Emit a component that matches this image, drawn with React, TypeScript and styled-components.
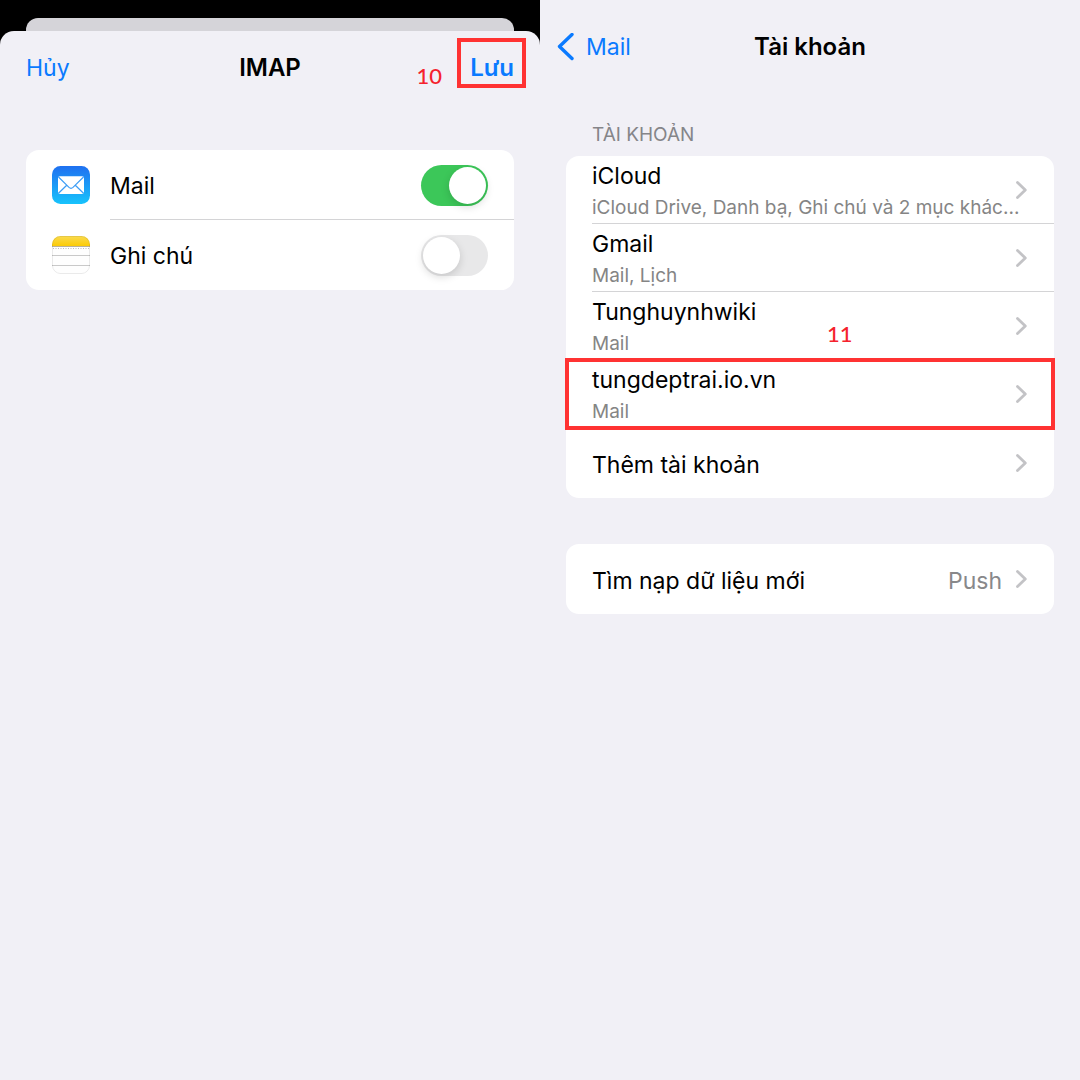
import React from "react";
import styled, { createGlobalStyle } from "styled-components";

const GlobalStyle = createGlobalStyle`
  *, *::before, *::after { box-sizing: border-box; }
  body {
    margin: 0;
    background: #f1f0f6;
    color: #000;
    font-family: Inter, "Noto Sans", sans-serif;
    font-size: 23px;
    line-height: 32px;
  }
  button, input { font: inherit; color: inherit; }
`;

const Page = styled.main`
  display: grid;
  grid-template-columns: repeat(2, minmax(0, 1fr));
  min-height: 100vh;
`;

const Backdrop = styled.section`
  display: flex;
  flex-direction: column;
  padding-top: 18px;
  background: #000;
`;

const SheetBehind = styled.div`
  height: 13px;
  margin: 0 26px;
  border-radius: 12px 12px 0 0;
  background: #d5d4d9;
`;

const Sheet = styled.div`
  flex: 1;
  border-radius: 14px 14px 0 0;
  background: #f1f0f6;
`;

const Screen = styled.section`
  background: #f1f0f6;
`;

const NavBar = styled.header<{ $height: number; $inset: number }>`
  display: grid;
  grid-template-columns: 1fr auto 1fr;
  align-items: center;
  height: ${(p) => p.$height}px;
  padding: 0 ${(p) => p.$inset}px;
`;

const Title = styled.h1`
  margin: 0;
  padding-top: 2px;
  font-size: 24px;
  font-weight: 600;
`;

const NavButton = styled.button<{ $strong?: boolean }>`
  display: flex;
  align-items: center;
  gap: 12px;
  justify-self: ${(p) => (p.$strong ? "end" : "start")};
  padding: 2px 0 0;
  border: 0;
  background: none;
  color: #0a7aff;
  font-size: ${(p) => (p.$strong ? 24 : 23)}px;
  font-weight: ${(p) => (p.$strong ? 600 : 400)};
  position: relative;
  cursor: pointer;
`;

const SaveFrame = styled.span`
  position: absolute;
  inset: -12px -12px -4px -13px;
  border: 4px solid #ff3232;
  pointer-events: none;
`;

const RowFrame = styled.span`
  position: absolute;
  inset: -2px -1px;
  border: 4px solid #ff3232;
  pointer-events: none;
`;

const Step = styled.span`
  position: absolute;
  color: #f5222d;
  font-family: Lato, sans-serif;
  font-size: 22px;
  font-weight: 500;
  line-height: 28px;
`;

const SaveStep = styled(Step)`
  right: 72px;
  top: 12px;
`;

const RowStep = styled(Step)`
  left: 261px;
  bottom: 12px;
`;

const Card = styled.ul<{ $top: number }>`
  margin: ${(p) => p.$top}px 26px 0;
  padding: 0;
  list-style: none;
  border-radius: 13px;
  background: #fff;
`;

const AppRow = styled.li`
  display: flex;
  align-items: center;
  height: 70px;
  padding-left: 26px;
`;

const AppLabel = styled.label<{ $divided?: boolean }>`
  display: flex;
  flex: 1;
  align-items: center;
  justify-content: space-between;
  height: 70px;
  margin-left: 20px;
  padding-right: 26px;
  border-bottom: 1px solid ${(p) => (p.$divided ? "#d4d4d6" : "transparent")};
`;

const AppName = styled.span`
  padding-top: 3px;
`;

const Switch = styled.input`
  appearance: none;
  width: 67px;
  height: 41px;
  margin: 1px 0 0;
  padding: 2px;
  border-radius: 21px;
  background: #e8e8e9;
  cursor: pointer;

  &::before {
    content: "";
    display: block;
    width: 37px;
    height: 37px;
    border-radius: 50%;
    background: #fff;
    box-shadow: 0 3px 8px rgba(0, 0, 0, 0.15);
  }
  &:checked { background: #3cc759; }
  &:checked::before { margin-left: auto; }
`;

const SectionLabel = styled.h2`
  margin: 31px 52px 0;
  color: #858589;
  font-size: 19px;
  font-weight: 400;
  line-height: 24px;
`;

const Row = styled.li`
  position: relative;
`;

const RowButton = styled.button`
  display: block;
  width: 100%;
  padding: 0 0 0 26px;
  border: 0;
  background: none;
  text-align: left;
  cursor: pointer;
`;

const RowContent = styled.span<{ $divided?: boolean; $tall?: boolean }>`
  display: flex;
  align-items: center;
  height: ${(p) => (p.$tall ? 70 : 68)}px;
  padding-right: 26px;
  border-bottom: 1px solid ${(p) => (p.$divided ? "#d4d4d6" : "transparent")};
`;

const RowText = styled.span`
  flex: 1;
  min-width: 0;
  padding-top: 4px;
  white-space: nowrap;
`;

const Detail = styled.span`
  display: block;
  color: #858585;
  font-size: 19px;
  line-height: 32px;
`;

const Value = styled.span`
  margin-right: 14px;
  padding-top: 4px;
  color: #88888a;
`;

const Chevron = () => (
  <svg width="12" height="20" viewBox="0 0 12 20" fill="none" aria-hidden="true">
    <path d="M1.5 2.5 9.3 10 1.5 17.5" stroke="#c3c3c6" strokeWidth="2.8" strokeLinecap="round" strokeLinejoin="round" />
  </svg>
);

const BackChevron = () => (
  <svg width="17" height="28" viewBox="0 0 17 28" fill="none" aria-hidden="true">
    <path d="M15 1.500 2.500 13.500 15 25.500" stroke="#0a7aff" strokeWidth="3.4" strokeLinecap="round" strokeLinejoin="round" />
  </svg>
);

const MailIcon = () => (
  <svg width="38" height="38" viewBox="0 0 38 38" aria-hidden="true">
    <defs>
      <linearGradient id="mailSky" x1="0" y1="0" x2="0" y2="1">
        <stop offset="0" stopColor="#1f70f0" />
        <stop offset="1" stopColor="#17c3fc" />
      </linearGradient>
    </defs>
    <rect width="38" height="38" rx="8.5" fill="url(#mailSky)" />
    <rect x="6" y="10.3" width="26" height="17.6" rx="1.8" fill="#fff" />
    <path d="M6.5 11 17 21.4q2 1.8 4 0L31.5 11M6.5 27.3 14.7 19.2M31.5 27.3 23.3 19.2" fill="none" stroke="#3d9df5" strokeWidth="1.2" />
  </svg>
);

const NotesIcon = () => (
  <svg width="38" height="38" viewBox="0 0 38 38" aria-hidden="true">
    <defs>
      <linearGradient id="notesGold" x1="0" y1="0" x2="0" y2="1">
        <stop offset="0" stopColor="#fadb50" />
        <stop offset="1" stopColor="#fccb05" />
      </linearGradient>
      <clipPath id="notesShape">
        <rect width="38" height="38" rx="8.5" />
      </clipPath>
    </defs>
    <g clipPath="url(#notesShape)">
      <rect width="38" height="38" fill="#fefefe" />
      <rect width="38" height="10" fill="url(#notesGold)" />
      <path d="M0 10.5H38" stroke="#b9b09a" />
      <path d="M1 12.5H38" stroke="#bdbdbd" strokeDasharray="1 1.5" />
      <path d="M0 19.5H38M0 29.5H38" stroke="#c9c9c9" />
    </g>
    <rect x=".5" y=".5" width="37" height="37" rx="8" fill="none" stroke="#000" strokeOpacity=".08" />
  </svg>
);

const accounts = [
  { name: "iCloud", detail: "iCloud Drive, Danh bạ, Ghi chú và 2 mục khác..." },
  { name: "Gmail", detail: "Mail, Lịch" },
  { name: "Tunghuynhwiki", detail: "Mail", step: "11" },
  { name: "tungdeptrai.io.vn", detail: "Mail", framed: true },
];

export default function App() {
  return (
    <>
      <GlobalStyle />
      <Page>
        <Backdrop>
          <SheetBehind />
          <Sheet>
            <NavBar $height={72} $inset={26}>
              <NavButton type="button">Hủy</NavButton>
              <Title>IMAP</Title>
              <NavButton type="button" $strong>
                Lưu
                <SaveFrame />
                <SaveStep>10</SaveStep>
              </NavButton>
            </NavBar>
            <Card $top={47}>
              <AppRow>
                <MailIcon />
                <AppLabel $divided>
                  <AppName>Mail</AppName>
                  <Switch type="checkbox" role="switch" defaultChecked />
                </AppLabel>
              </AppRow>
              <AppRow>
                <NotesIcon />
                <AppLabel>
                  <AppName>Ghi chú</AppName>
                  <Switch type="checkbox" role="switch" />
                </AppLabel>
              </AppRow>
            </Card>
          </Sheet>
        </Backdrop>
        <Screen>
          <NavBar $height={92} $inset={17}>
            <NavButton type="button">
              <BackChevron />
              Mail
            </NavButton>
            <Title>Tài khoản</Title>
          </NavBar>
          <SectionLabel>TÀI KHOẢN</SectionLabel>
          <Card $top={9}>
            {accounts.map((account) => (
              <Row key={account.name}>
                <RowButton type="button">
                  <RowContent $divided>
                    <RowText>
                      {account.name}
                      <Detail>{account.detail}</Detail>
                    </RowText>
                    <Chevron />
                  </RowContent>
                </RowButton>
                {account.step && <RowStep>{account.step}</RowStep>}
                {account.framed && <RowFrame />}
              </Row>
            ))}
            <Row>
              <RowButton type="button">
                <RowContent $tall>
                  <RowText>Thêm tài khoản</RowText>
                  <Chevron />
                </RowContent>
              </RowButton>
            </Row>
          </Card>
          <Card $top={46}>
            <Row>
              <RowButton type="button">
                <RowContent $tall>
                  <RowText>Tìm nạp dữ liệu mới</RowText>
                  <Value>Push</Value>
                  <Chevron />
                </RowContent>
              </RowButton>
            </Row>
          </Card>
        </Screen>
      </Page>
    </>
  );
}
